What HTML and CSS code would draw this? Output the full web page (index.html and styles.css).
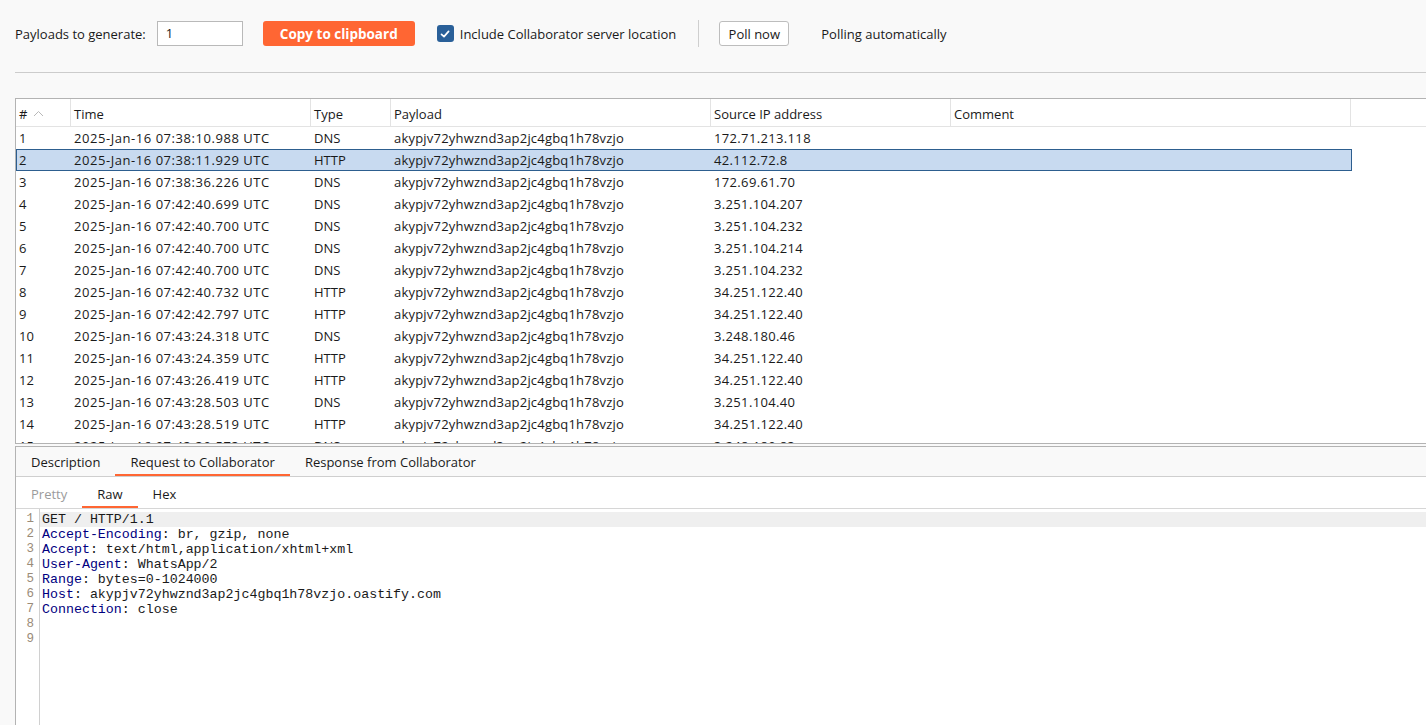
FILE: index.html
```html
<!DOCTYPE html>
<html>
<head>
<meta charset="utf-8">
<link rel="stylesheet" href="styles.css">
</head>
<body>
<div class="app">
  <div class="toolbar">
    <span class="lbl">Payloads to generate:</span>
    <div class="num">1</div>
    <button class="copy">Copy to clipboard</button>
    <label class="chk"><span class="box"><svg width="12" height="12" viewBox="0 0 12 12"><path d="M2.5 6.3 L5 8.6 L9.6 3.4" fill="none" stroke="#fff" stroke-width="1.7" stroke-linecap="round" stroke-linejoin="round"/></svg></span>Include Collaborator server location</label>
    <span class="vsep"></span>
    <button class="poll">Poll now</button>
    <span class="auto">Polling automatically</span>
  </div>
  <div class="hrule"></div>

  <div class="table-panel">
    <div class="thead">
      <div class="c c1">#<svg class="sort" width="11" height="7" viewBox="0 0 11 7"><path d="M1 6 L5.5 1.5 L10 6" fill="none" stroke="#b8b8b8" stroke-width="1"/></svg></div>
      <div class="c c2">Time</div>
      <div class="c c3">Type</div>
      <div class="c c4">Payload</div>
      <div class="c c5">Source IP address</div>
      <div class="c c6">Comment</div>
      <div class="c c7"></div>
    </div>
    <div class="tbody">
      <div class="row"><div class="c c1">1</div><div class="c c2">2025-Jan-16 07:38:10.988 UTC</div><div class="c c3">DNS</div><div class="c c4">akypjv72yhwznd3ap2jc4gbq1h78vzjo</div><div class="c c5">172.71.213.118</div><div class="c c6"></div></div>
      <div class="row sel"><div class="c c1">2</div><div class="c c2">2025-Jan-16 07:38:11.929 UTC</div><div class="c c3">HTTP</div><div class="c c4">akypjv72yhwznd3ap2jc4gbq1h78vzjo</div><div class="c c5">42.112.72.8</div><div class="c c6"></div></div>
      <div class="row"><div class="c c1">3</div><div class="c c2">2025-Jan-16 07:38:36.226 UTC</div><div class="c c3">DNS</div><div class="c c4">akypjv72yhwznd3ap2jc4gbq1h78vzjo</div><div class="c c5">172.69.61.70</div><div class="c c6"></div></div>
      <div class="row"><div class="c c1">4</div><div class="c c2">2025-Jan-16 07:42:40.699 UTC</div><div class="c c3">DNS</div><div class="c c4">akypjv72yhwznd3ap2jc4gbq1h78vzjo</div><div class="c c5">3.251.104.207</div><div class="c c6"></div></div>
      <div class="row"><div class="c c1">5</div><div class="c c2">2025-Jan-16 07:42:40.700 UTC</div><div class="c c3">DNS</div><div class="c c4">akypjv72yhwznd3ap2jc4gbq1h78vzjo</div><div class="c c5">3.251.104.232</div><div class="c c6"></div></div>
      <div class="row"><div class="c c1">6</div><div class="c c2">2025-Jan-16 07:42:40.700 UTC</div><div class="c c3">DNS</div><div class="c c4">akypjv72yhwznd3ap2jc4gbq1h78vzjo</div><div class="c c5">3.251.104.214</div><div class="c c6"></div></div>
      <div class="row"><div class="c c1">7</div><div class="c c2">2025-Jan-16 07:42:40.700 UTC</div><div class="c c3">DNS</div><div class="c c4">akypjv72yhwznd3ap2jc4gbq1h78vzjo</div><div class="c c5">3.251.104.232</div><div class="c c6"></div></div>
      <div class="row"><div class="c c1">8</div><div class="c c2">2025-Jan-16 07:42:40.732 UTC</div><div class="c c3">HTTP</div><div class="c c4">akypjv72yhwznd3ap2jc4gbq1h78vzjo</div><div class="c c5">34.251.122.40</div><div class="c c6"></div></div>
      <div class="row"><div class="c c1">9</div><div class="c c2">2025-Jan-16 07:42:42.797 UTC</div><div class="c c3">HTTP</div><div class="c c4">akypjv72yhwznd3ap2jc4gbq1h78vzjo</div><div class="c c5">34.251.122.40</div><div class="c c6"></div></div>
      <div class="row"><div class="c c1">10</div><div class="c c2">2025-Jan-16 07:43:24.318 UTC</div><div class="c c3">DNS</div><div class="c c4">akypjv72yhwznd3ap2jc4gbq1h78vzjo</div><div class="c c5">3.248.180.46</div><div class="c c6"></div></div>
      <div class="row"><div class="c c1">11</div><div class="c c2">2025-Jan-16 07:43:24.359 UTC</div><div class="c c3">HTTP</div><div class="c c4">akypjv72yhwznd3ap2jc4gbq1h78vzjo</div><div class="c c5">34.251.122.40</div><div class="c c6"></div></div>
      <div class="row"><div class="c c1">12</div><div class="c c2">2025-Jan-16 07:43:26.419 UTC</div><div class="c c3">HTTP</div><div class="c c4">akypjv72yhwznd3ap2jc4gbq1h78vzjo</div><div class="c c5">34.251.122.40</div><div class="c c6"></div></div>
      <div class="row"><div class="c c1">13</div><div class="c c2">2025-Jan-16 07:43:28.503 UTC</div><div class="c c3">DNS</div><div class="c c4">akypjv72yhwznd3ap2jc4gbq1h78vzjo</div><div class="c c5">3.251.104.40</div><div class="c c6"></div></div>
      <div class="row"><div class="c c1">14</div><div class="c c2">2025-Jan-16 07:43:28.519 UTC</div><div class="c c3">HTTP</div><div class="c c4">akypjv72yhwznd3ap2jc4gbq1h78vzjo</div><div class="c c5">34.251.122.40</div><div class="c c6"></div></div>
      <div class="row"><div class="c c1">15</div><div class="c c2">2025-Jan-16 07:43:30.573 UTC</div><div class="c c3">DNS</div><div class="c c4">akypjv72yhwznd3ap2jc4gbq1h78vzjo</div><div class="c c5">3.248.180.83</div><div class="c c6"></div></div>
    </div>
  </div>

  <div class="detail">
    <div class="tabs">
      <span class="tab">Description</span>
      <span class="tab active">Request to Collaborator</span>
      <span class="tab">Response from Collaborator</span>
    </div>
    <div class="subtabs">
      <span class="stab dim">Pretty</span>
      <span class="stab active">Raw</span>
      <span class="stab">Hex</span>
    </div>
    <div class="editor">
      <div class="gutter">
        <div>1</div><div>2</div><div>3</div><div>4</div><div>5</div><div>6</div><div>7</div><div>8</div><div>9</div>
      </div>
      <div class="code">
        <div class="ln cur">GET / HTTP/1.1</div>
        <div class="ln"><span class="k">Accept-Encoding</span>: br, gzip, none</div>
        <div class="ln"><span class="k">Accept</span>: text/html,application/xhtml+xml</div>
        <div class="ln"><span class="k">User-Agent</span>: WhatsApp/2</div>
        <div class="ln"><span class="k">Range</span>: bytes=0-1024000</div>
        <div class="ln"><span class="k">Host</span>: akypjv72yhwznd3ap2jc4gbq1h78vzjo.oastify.com</div>
        <div class="ln"><span class="k">Connection</span>: close</div>
        <div class="ln"></div>
        <div class="ln"></div>
      </div>
    </div>
  </div>
</div>
</body>
</html>
```

FILE: styles.css
```css
* { box-sizing: border-box; }
html, body { margin: 0; padding: 0; }
body {
  width: 1426px;
  height: 725px;
  overflow: hidden;
  background: #f9f9f9;
  font-family: "Open Sans", "Noto Sans", sans-serif;
  font-size: 13px;
  color: #1a1a1a;
}
.app {
  display: flex;
  flex-direction: column;
  height: 725px;
}
.toolbar {
  display: flex;
  align-items: center;
  height: 25px;
  margin-top: 21px;
  padding-left: 15px;
}
.lbl { margin-right: 11px; }
.num {
  width: 86px;
  height: 25px;
  border: 1px solid #b9b9b9;
  background: #fff;
  padding: 3px 0 0 8px;
  line-height: 17px;
}
.copy {
  margin-left: 20px;
  width: 152px;
  height: 25px;
  background: #ff6633;
  color: #fff;
  border: none;
  border-radius: 3px;
  font-family: inherit;
  font-size: 13.5px;
  font-weight: 700;
  padding: 0;
}
.chk {
  display: flex;
  align-items: center;
  margin-left: 22px;
}
.box {
  width: 17px;
  height: 17px;
  border-radius: 3px;
  background: #2a6099;
  display: flex;
  align-items: center;
  justify-content: center;
  margin-right: 6px;
}
.vsep {
  width: 1px;
  height: 27px;
  background: #cfcfcf;
  margin-left: 22px;
}
.poll {
  margin-left: 20px;
  width: 70px;
  height: 25px;
  background: #fff;
  border: 1px solid #bdbdbd;
  border-radius: 3px;
  font-family: inherit;
  font-size: 13px;
  color: #1a1a1a;
  padding: 0;
}
.auto { margin-left: 32px; }
.hrule {
  margin-top: 26px;
  margin-left: 15px;
  height: 1px;
  background: #cccccc;
}
.table-panel {
  margin-top: 25px;
  margin-left: 15px;
  height: 346px;
  border-top: 1px solid #b3b3b3;
  border-left: 1px solid #b3b3b3;
  border-bottom: 1px solid #b3b3b3;
  background: #fff;
  overflow: hidden;
  display: flex;
  flex-direction: column;
}
.thead {
  display: flex;
  height: 28px;
  border-bottom: 1px solid #e3e3e3;
  flex: none;
}
.thead .c {
  border-right: 1px solid #e3e3e3;
  padding-top: 3px;
  line-height: 24px;
}
.thead .c7 { flex: 1; border-right: none; }
.c {
  padding-left: 3px;
  white-space: nowrap;
  overflow: hidden;
  flex: none;
}
.c1 { width: 55px; }
.c2 { width: 240px; }
.c3 { width: 80px; }
.c4 { width: 320px; }
.c5 { width: 240px; }
.c6 { width: 400px; }
.sort { margin-left: 6px; vertical-align: 2px; }
.row {
  display: flex;
  height: 22px;
  padding-top: 1px;
  line-height: 21px;
  width: 1336px;
}
.row .c { padding-left: 3px; }
.row .c2 { letter-spacing: 0.55px; }
.row .c4 { letter-spacing: 0.2px; }
.row .c5 { letter-spacing: 0.35px; }
.row.sel {
  background: #c8daf0;
  outline: 1px solid #2d5e8f;
  outline-offset: -1px;
}
.detail {
  margin-top: 2px;
  margin-left: 15px;
  flex: 1;
  border-top: 1px solid #b3b3b3;
  border-left: 1px solid #b3b3b3;
  display: flex;
  flex-direction: column;
  background: #fff;
}
.tabs {
  height: 30px;
  background: #f9f9f9;
  border-bottom: 1px solid #cfcfcf;
  display: flex;
  flex: none;
}
.tab {
  padding: 3px 15px 0;
  line-height: 24px;
  border-bottom: 2px solid transparent;
  height: 29px;
}
.tab.active { border-bottom-color: #ff6633; }
.subtabs {
  height: 32px;
  background: #fff;
  border-bottom: 1px solid #d6d6d6;
  display: flex;
  flex: none;
}
.stab {
  padding: 5px 15px 0;
  line-height: 24px;
  height: 31px;
  border-bottom: 2px solid transparent;
}
.stab.active { border-bottom-color: #ff6633; }
.stab.dim { color: #9b9b9b; }
.editor {
  flex: 1;
  display: flex;
  font-family: "Liberation Mono", "Courier New", monospace;
  font-size: 13.3px;
  line-height: 15px;
  color: #1a1a1a;
}
.gutter {
  width: 24px;
  border-right: 1px solid #d0d0d0;
  text-align: right;
  padding-right: 5px;
  padding-top: 3px;
  color: #9a8b78;
  font-size: 12.5px;
}
.code {
  flex: 1;
  padding-top: 3px;
}
.ln { height: 15px; padding-left: 2px; white-space: pre; }
.ln.cur { background: #efefef; }
.k { color: #000080; }
```
